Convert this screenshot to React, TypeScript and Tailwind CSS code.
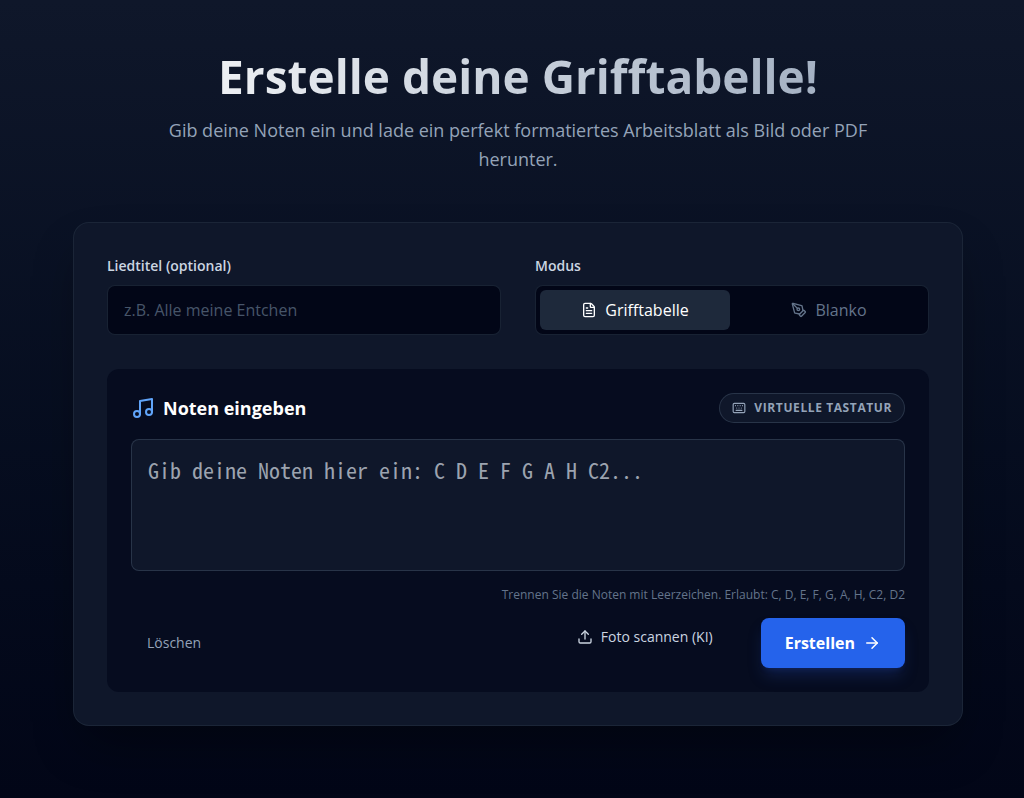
import { useState } from 'react';
import { ArrowRight, FileText, Keyboard, Music, PenTool, Upload } from 'lucide-react';

const modes = [
  { id: 'chart', label: 'Grifftabelle', icon: FileText },
  { id: 'blank', label: 'Blanko', icon: PenTool },
];

export default function App() {
  const [mode, setMode] = useState('chart');
  const [title, setTitle] = useState('');
  const [notes, setNotes] = useState('');

  return (
    <div className="min-h-screen bg-linear-to-b from-[#0f172a] to-[#020617] pl-3 font-['Open_Sans','Noto_Sans',sans-serif] text-[#cbd5e1]">
      <main className="mx-auto max-w-[890px] pt-[46px] pb-[72px]">
        <header className="mb-12 text-center">
          <h1 className="mb-2.5 bg-linear-to-r from-white to-[#94a3b8] bg-clip-text text-[46px] leading-[60px] font-bold text-transparent">
            Erstelle deine Grifftabelle!
          </h1>
          <p className="mx-auto max-w-[700px] text-lg leading-[29px] text-[#94a3b8]">
            Gib deine Noten ein und lade ein perfekt formatiertes Arbeitsblatt als Bild oder PDF herunter.
          </p>
        </header>

        <section className="rounded-2xl border border-[#1e293b]/80 bg-[#0f172a] p-[33px] shadow-2xl shadow-black/40">
          <div className="mb-[34px] grid grid-cols-2 gap-[34px]">
            <div>
              <label htmlFor="title" className="mb-[9px] block text-sm font-semibold">
                Liedtitel (optional)
              </label>
              <input
                id="title"
                type="text"
                value={title}
                onChange={(e) => setTitle(e.target.value)}
                placeholder="z.B. Alle meine Entchen"
                className="h-[50px] w-full rounded-lg border border-[#1e293b]/80 bg-[#020617] px-4 placeholder:text-[#475569]"
              />
            </div>

            <div role="group" aria-labelledby="mode-label">
              <span id="mode-label" className="mb-[9px] block text-sm font-semibold">
                Modus
              </span>
              <div className="grid h-[50px] grid-cols-2 gap-1 rounded-lg border border-[#1e293b]/80 bg-[#020617] p-1">
                {modes.map(({ id, label, icon: Icon }) => (
                  <button
                    key={id}
                    type="button"
                    aria-pressed={mode === id}
                    onClick={() => setMode(id)}
                    className={`flex items-center justify-center gap-2 rounded-md ${
                      mode === id ? 'bg-[#1e293b] text-white' : 'text-[#64748b]'
                    }`}
                  >
                    <Icon className="size-4" />
                    {label}
                  </button>
                ))}
              </div>
            </div>
          </div>

          <div className="rounded-xl bg-[#060c1f] p-6">
            <div className="mb-4 flex items-center justify-between">
              <h2 className="flex items-center gap-2 text-lg font-bold text-white">
                <Music className="size-6 text-[#60a5fa]" />
                <label htmlFor="notes">Noten eingeben</label>
              </h2>
              <button
                type="button"
                className="flex h-[30px] items-center gap-2 rounded-full border border-[#334155]/70 bg-[#0f172a] px-3 text-xs font-bold tracking-wider text-[#94a3b8] uppercase"
              >
                <Keyboard className="size-3.5" />
                Virtuelle Tastatur
              </button>
            </div>

            <textarea
              id="notes"
              value={notes}
              onChange={(e) => setNotes(e.target.value)}
              placeholder="Gib deine Noten hier ein: C D E F G A H C2..."
              className="block h-[132px] w-full resize-none rounded-lg border border-[#334155]/70 bg-[#0f172a] px-4 py-3.5 font-['Noto_Sans_Mono_CJK_SC','Liberation_Mono',monospace] text-[22px] leading-[30px] placeholder:text-[#9ca3af]"
            />
            <p className="mt-4 text-right text-xs text-[#64748b]">
              Trennen Sie die Noten mit Leerzeichen. Erlaubt: C, D, E, F, G, A, H, C2, D2
            </p>

            <div className="mt-[15px] flex items-center justify-between">
              <button type="button" onClick={() => setNotes('')} className="px-4 py-2 text-sm text-[#94a3b8]">
                Löschen
              </button>
              <div className="flex items-start gap-8">
                <button type="button" className="flex h-[38px] items-center gap-2 px-4 text-sm text-[#cbd5e1]">
                  <Upload className="size-4" />
                  Foto scannen (KI)
                </button>
                <button
                  type="button"
                  className="flex h-[50px] items-center gap-2 rounded-lg bg-[#2563eb] px-6 font-bold text-white shadow-lg shadow-[#1e3a8a]/40"
                >
                  Erstellen
                  <ArrowRight className="size-[18px]" />
                </button>
              </div>
            </div>
          </div>
        </section>
      </main>
    </div>
  );
}
